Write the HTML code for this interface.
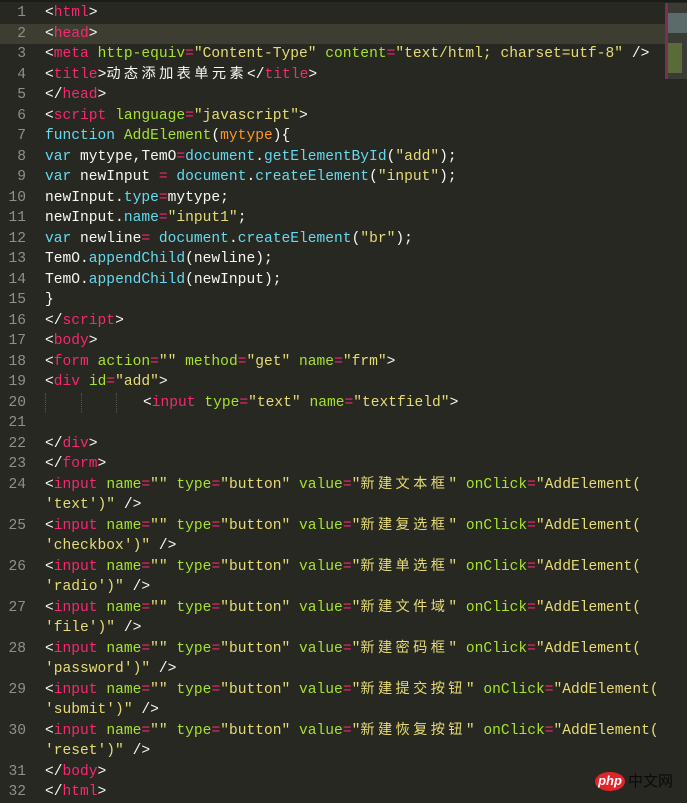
<!DOCTYPE html>
<html><head><meta charset="utf-8"><style>
body{margin:0;width:687px;height:800px;background:#272822;overflow:hidden;position:relative;font-family:"Liberation Mono","Noto Sans CJK SC",monospace;font-size:14.6px;color:#f8f8f2}
.r{position:absolute;left:0;width:687px;height:20.5px;line-height:20.5px;white-space:pre}
.n{position:absolute;left:0;width:26px;text-align:right;color:#8f908a}
.c{position:absolute;left:45px}
.t{color:#f92672}.a{color:#a6e22e}.s{color:#e6db74}.b{color:#66d9ef}.o{color:#fd971f}
.z{letter-spacing:3.4px;font-size:14.2px}
.hl{background:#3e3d32}
.g{position:absolute;top:0;height:20px;border-left:1px dotted #555}
</style></head><body>
<div style="position:absolute;left:0;top:0;width:687px;height:2px;background:#1b1c18"></div>
<div class="r" style="top:3px"><span class="n">1</span><span class="c">&lt;<span class="t">html</span>&gt;</span></div>
<div class="r hl" style="top:23.5px;width:665px"><span class="n">2</span><span class="c">&lt;<span class="t">head</span>&gt;</span></div>
<div class="r" style="top:44px"><span class="n">3</span><span class="c">&lt;<span class="t">meta</span> <span class="a">http-equiv</span><span class="t">=</span><span class="s">"Content-Type"</span> <span class="a">content</span><span class="t">=</span><span class="s">"text/html; charset=utf-8"</span> /&gt;</span></div>
<div class="r" style="top:64.5px"><span class="n">4</span><span class="c">&lt;<span class="t">title</span>&gt;<span class="z">动态添加表单元素</span>&lt;/<span class="t">title</span>&gt;</span></div>
<div class="r" style="top:85px"><span class="n">5</span><span class="c">&lt;/<span class="t">head</span>&gt;</span></div>
<div class="r" style="top:105.5px"><span class="n">6</span><span class="c">&lt;<span class="t">script</span> <span class="a">language</span><span class="t">=</span><span class="s">"javascript"</span>&gt;</span></div>
<div class="r" style="top:126px"><span class="n">7</span><span class="c"><span class="b">function</span> <span class="a">AddElement</span>(<span class="o">mytype</span>){</span></div>
<div class="r" style="top:146.5px"><span class="n">8</span><span class="c"><span class="b">var</span> mytype,TemO<span class="t">=</span><span class="b">document</span>.<span class="b">getElementById</span>(<span class="s">"add"</span>);</span></div>
<div class="r" style="top:167px"><span class="n">9</span><span class="c"><span class="b">var</span> newInput <span class="t">=</span> <span class="b">document</span>.<span class="b">createElement</span>(<span class="s">"input"</span>);</span></div>
<div class="r" style="top:187.5px"><span class="n">10</span><span class="c">newInput.<span class="b">type</span><span class="t">=</span>mytype;</span></div>
<div class="r" style="top:208px"><span class="n">11</span><span class="c">newInput.<span class="b">name</span><span class="t">=</span><span class="s">"input1"</span>;</span></div>
<div class="r" style="top:228.5px"><span class="n">12</span><span class="c"><span class="b">var</span> newline<span class="t">=</span> <span class="b">document</span>.<span class="b">createElement</span>(<span class="s">"br"</span>);</span></div>
<div class="r" style="top:249px"><span class="n">13</span><span class="c">TemO.<span class="b">appendChild</span>(newline);</span></div>
<div class="r" style="top:269.5px"><span class="n">14</span><span class="c">TemO.<span class="b">appendChild</span>(newInput);</span></div>
<div class="r" style="top:290px"><span class="n">15</span><span class="c">}</span></div>
<div class="r" style="top:310.5px"><span class="n">16</span><span class="c">&lt;/<span class="t">script</span>&gt;</span></div>
<div class="r" style="top:331px"><span class="n">17</span><span class="c">&lt;<span class="t">body</span>&gt;</span></div>
<div class="r" style="top:351.5px"><span class="n">18</span><span class="c">&lt;<span class="t">form</span> <span class="a">action</span><span class="t">=</span><span class="s">""</span> <span class="a">method</span><span class="t">=</span><span class="s">"get"</span> <span class="a">name</span><span class="t">=</span><span class="s">"frm"</span>&gt;</span></div>
<div class="r" style="top:372px"><span class="n">19</span><span class="c">&lt;<span class="t">div</span> <span class="a">id</span><span class="t">=</span><span class="s">"add"</span>&gt;</span></div>
<div class="r" style="top:392.5px"><span class="n">20</span><span class="g" style="left:45px"></span><span class="g" style="left:81px"></span><span class="g" style="left:116px"></span><span class="c" style="left:143px">&lt;<span class="t">input</span> <span class="a">type</span><span class="t">=</span><span class="s">"text"</span> <span class="a">name</span><span class="t">=</span><span class="s">"textfield"</span>&gt;</span></div>
<div class="r" style="top:413px"><span class="n">21</span></div>
<div class="r" style="top:433.5px"><span class="n">22</span><span class="c">&lt;/<span class="t">div</span>&gt;</span></div>
<div class="r" style="top:454px"><span class="n">23</span><span class="c">&lt;/<span class="t">form</span>&gt;</span></div>
<div class="r" style="top:474.5px"><span class="n">24</span><span class="c">&lt;<span class="t">input</span> <span class="a">name</span><span class="t">=</span><span class="s">""</span> <span class="a">type</span><span class="t">=</span><span class="s">"button"</span> <span class="a">value</span><span class="t">=</span><span class="s">"<span class="z">新建文本框</span>"</span> <span class="a">onClick</span><span class="t">=</span><span class="s">"AddElement(</span></span></div>
<div class="r" style="top:495px"><span class="c"><span class="s">'text')"</span> /&gt;</span></div>
<div class="r" style="top:515.5px"><span class="n">25</span><span class="c">&lt;<span class="t">input</span> <span class="a">name</span><span class="t">=</span><span class="s">""</span> <span class="a">type</span><span class="t">=</span><span class="s">"button"</span> <span class="a">value</span><span class="t">=</span><span class="s">"<span class="z">新建复选框</span>"</span> <span class="a">onClick</span><span class="t">=</span><span class="s">"AddElement(</span></span></div>
<div class="r" style="top:536px"><span class="c"><span class="s">'checkbox')"</span> /&gt;</span></div>
<div class="r" style="top:556.5px"><span class="n">26</span><span class="c">&lt;<span class="t">input</span> <span class="a">name</span><span class="t">=</span><span class="s">""</span> <span class="a">type</span><span class="t">=</span><span class="s">"button"</span> <span class="a">value</span><span class="t">=</span><span class="s">"<span class="z">新建单选框</span>"</span> <span class="a">onClick</span><span class="t">=</span><span class="s">"AddElement(</span></span></div>
<div class="r" style="top:577px"><span class="c"><span class="s">'radio')"</span> /&gt;</span></div>
<div class="r" style="top:597.5px"><span class="n">27</span><span class="c">&lt;<span class="t">input</span> <span class="a">name</span><span class="t">=</span><span class="s">""</span> <span class="a">type</span><span class="t">=</span><span class="s">"button"</span> <span class="a">value</span><span class="t">=</span><span class="s">"<span class="z">新建文件域</span>"</span> <span class="a">onClick</span><span class="t">=</span><span class="s">"AddElement(</span></span></div>
<div class="r" style="top:618px"><span class="c"><span class="s">'file')"</span> /&gt;</span></div>
<div class="r" style="top:638.5px"><span class="n">28</span><span class="c">&lt;<span class="t">input</span> <span class="a">name</span><span class="t">=</span><span class="s">""</span> <span class="a">type</span><span class="t">=</span><span class="s">"button"</span> <span class="a">value</span><span class="t">=</span><span class="s">"<span class="z">新建密码框</span>"</span> <span class="a">onClick</span><span class="t">=</span><span class="s">"AddElement(</span></span></div>
<div class="r" style="top:659px"><span class="c"><span class="s">'password')"</span> /&gt;</span></div>
<div class="r" style="top:679.5px"><span class="n">29</span><span class="c">&lt;<span class="t">input</span> <span class="a">name</span><span class="t">=</span><span class="s">""</span> <span class="a">type</span><span class="t">=</span><span class="s">"button"</span> <span class="a">value</span><span class="t">=</span><span class="s">"<span class="z">新建提交按钮</span>"</span> <span class="a">onClick</span><span class="t">=</span><span class="s">"AddElement(</span></span></div>
<div class="r" style="top:700px"><span class="c"><span class="s">'submit')"</span> /&gt;</span></div>
<div class="r" style="top:720.5px"><span class="n">30</span><span class="c">&lt;<span class="t">input</span> <span class="a">name</span><span class="t">=</span><span class="s">""</span> <span class="a">type</span><span class="t">=</span><span class="s">"button"</span> <span class="a">value</span><span class="t">=</span><span class="s">"<span class="z">新建恢复按钮</span>"</span> <span class="a">onClick</span><span class="t">=</span><span class="s">"AddElement(</span></span></div>
<div class="r" style="top:741px"><span class="c"><span class="s">'reset')"</span> /&gt;</span></div>
<div class="r" style="top:761.5px"><span class="n">31</span><span class="c">&lt;/<span class="t">body</span>&gt;</span></div>
<div class="r" style="top:782px"><span class="n">32</span><span class="c">&lt;/<span class="t">html</span>&gt;</span></div>
<!-- minimap -->
<div style="position:absolute;left:665px;top:3px;width:22px;height:76px;background:#3a3b35">
<div style="position:absolute;left:0;top:0;width:3px;height:76px;background:#7a3050"></div>
<div style="position:absolute;left:3px;top:10px;width:19px;height:20px;background:#5a6b6a"></div>
<div style="position:absolute;left:3px;top:40px;width:14px;height:30px;background:#5a6a38"></div>
</div>
<!-- php logo -->
<div style="position:absolute;left:595px;top:772px;width:30px;height:19px;border-radius:50%;background:#e0262a;color:#fff;font-family:'Liberation Sans',sans-serif;font-style:italic;font-weight:bold;font-size:13px;line-height:18px;text-align:center">php</div>
<div style="position:absolute;left:628px;top:771px;color:#0a0a0a;font-family:'Noto Sans CJK SC',sans-serif;font-size:15px;line-height:20px">中文网</div>
</body></html>
